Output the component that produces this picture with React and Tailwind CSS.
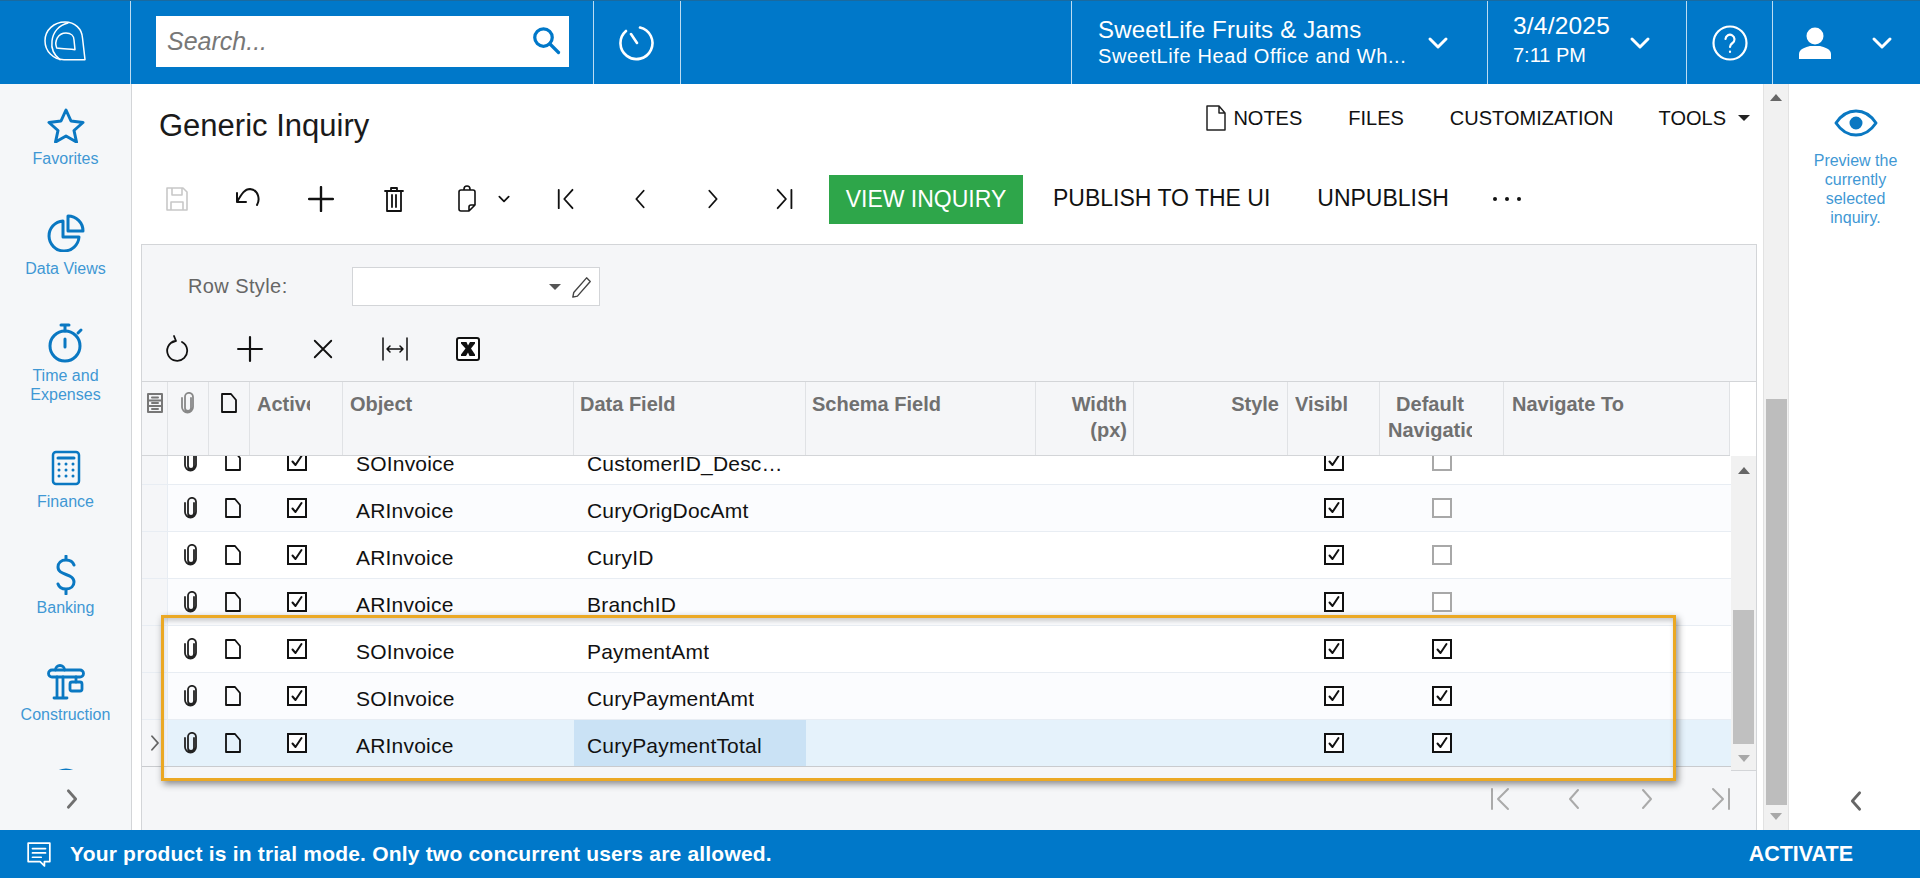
import React from 'react'

const Ico = ({ w = 24, h = 24, vb = '0 0 24 24', sw = 2, color = 'currentColor', children, className = '' }) => (
  <svg width={w} height={h} viewBox={vb} fill="none" stroke={color} strokeWidth={sw} strokeLinecap="round" strokeLinejoin="round" className={className}>
    {children}
  </svg>
)

const Chevron = ({ dir = 'down', color = '#fff', w = 22, h = 22, sw = 3 }) => {
  const d = { down: 'M4 8l8 8 8-8', right: 'M8 3l8 9-8 9', left: 'M16 3l-8 9 8 9' }[dir]
  return <Ico w={w} h={h} sw={sw} color={color}><path d={d} /></Ico>
}

const Clip = ({ color = '#222' }) => (
  <Ico w={16} h={22} vb="0 0 16 22" sw={1.8} color={color}>
    <path d="M11 6v10a3 3 0 0 1-6 0V5a4 4 0 0 1 8-.3V15a5.5 5.5 0 0 1-11 0V6" />
  </Ico>
)

const Doc = () => (
  <Ico w={18} h={22} vb="0 0 18 22" sw={1.8} color="#111">
    <path d="M2 2h9l5 6v12H2z" />
  </Ico>
)

const Check = ({ on = true }) => (
  <div className={on ? 'w-5 h-5 border-2 border-[#111] bg-white flex items-center justify-center' : 'w-5 h-5 border-2 border-[#a8a8a8] bg-white'}>
    {on && (
      <Ico w={16} h={16} vb="0 0 16 16" sw={2} color="#111"><path d="M3.5 8.5l3 3.5 6-9" /></Ico>
    )}
  </div>
)

const navItems = [
  {
    label: ['Favorites'], h: 'h-[107px]', box: 'h-[39px]',
    icon: <Ico w={38} h={36} vb="0 0 38 36" sw={3}><path d="M19 3l5 11 12 1.5-9 8 2.500 11.500L19 29 8.500 35 11 23.500l-9-8L14 14z" /></Ico>,
  },
  {
    label: ['Data Views'], h: 'h-[109px]', box: 'h-[42px]',
    icon: (
      <Ico w={38} h={38} vb="0 0 38 38" sw={3}>
        <path d="M16 7a15 15 0 1 0 16 16H16z" />
        <path d="M21 2a15 15 0 0 1 15 15H21z" />
      </Ico>
    ),
  },
  {
    label: ['Time and', 'Expenses'], h: 'h-[127px]', box: 'h-[40px]',
    icon: (
      <Ico w={38} h={40} vb="0 0 38 40" sw={3}>
        <circle cx="18" cy="23" r="15" />
        <path d="M14 2h8M18 2v6M18 16v8M31 10l3-3" />
      </Ico>
    ),
  },
  {
    label: ['Finance'], h: 'h-[105px]', box: 'h-[39px]',
    icon: (
      <Ico w={30} h={36} vb="0 0 30 36" sw={2.500}>
        <rect x="2" y="2" width="26" height="32" rx="3" />
        <path d="M7 8h16" strokeWidth="3" />
        <path d="M8 14h.01M15 14h.01M22 14h.01M8 20h.01M15 20h.01M22 20h.01M8 26h.01M15 26h.01M22 26h.01" strokeWidth="3" />
      </Ico>
    ),
  },
  {
    label: ['Banking'], h: 'h-[107px]', box: 'h-[40px]',
    icon: (
      <Ico w={24} h={40} vb="0 0 24 40" sw={3}>
        <path d="M20 10c-1-3-4-5-8-5-5 0-8 3-8 7 0 9 16 6 16 15 0 4-3 7-8 7-4 0-7-2-8-5M12 1v4M12 34v5" />
      </Ico>
    ),
  },
  {
    label: ['Construction'], h: 'h-[105px]', box: 'h-[40px]',
    icon: (
      <Ico w={38} h={38} vb="0 0 38 38" sw={2.800}>
        <path d="M5 8h28a3.500 3.500 0 0 1 0 7H5a3.500 3.500 0 0 1 0-7z" />
        <path d="M8.500 8a4.500 4.500 0 0 1 9 0M10 15v21M16 15v21M7 36h13M29 15v5" />
        <rect x="23" y="20" width="12" height="9" rx="2" />
      </Ico>
    ),
  },
  {
    label: [], h: 'h-[105px]', box: 'h-[40px]',
    icon: <Ico w={38} h={38} vb="0 0 38 38" sw={3}><circle cx="19" cy="19" r="16" /></Ico>,
  },
]

const columns = [
  { w: 'w-[26px]', icon: 'cab' },
  { w: 'w-[41px]', icon: 'clip' },
  { w: 'w-[41px]', icon: 'doc' },
  { w: 'w-[93px]', lines: ['Active'], inner: 'w-[53px]', pad: 'pl-[7px]' },
  { w: 'w-[231px]', lines: ['Object'], pad: 'pl-[7px]' },
  { w: 'w-[232px]', lines: ['Data Field'], pad: 'pl-[6px]' },
  { w: 'w-[230px]', lines: ['Schema Field'], pad: 'pl-[6px]' },
  { w: 'w-[98px]', lines: ['Width', '(px)'], pad: 'pr-[6px] text-right' },
  { w: 'w-[154px]', lines: ['Style'], pad: 'pr-2 text-right' },
  { w: 'w-[92px]', lines: ['Visible'], pad: 'pl-[7px]', inner: 'w-[53px]' },
  { w: 'w-[124px]', lines: ['Default', 'Navigation'], pad: 'pl-2', inner: 'w-[84px] text-center' },
  { w: 'w-[226px]', lines: ['Navigate To'], pad: 'pl-2' },
]

const rows = [
  { obj: 'SOInvoice', field: 'CustomerID_Description', nav: false, partial: true },
  { obj: 'ARInvoice', field: 'CuryOrigDocAmt', nav: false },
  { obj: 'ARInvoice', field: 'CuryID', nav: false },
  { obj: 'ARInvoice', field: 'BranchID', nav: false },
  { obj: 'SOInvoice', field: 'PaymentAmt', nav: true },
  { obj: 'SOInvoice', field: 'CuryPaymentAmt', nav: true },
  { obj: 'ARInvoice', field: 'CuryPaymentTotal', nav: true, selected: true },
]

function GridRow({ row, i }) {
  const bg = row.selected ? 'bg-[#e5f2fb]' : i % 2 === 0 ? 'bg-white' : 'bg-[#fbfcfe]'
  return (
    <div className={`flex border-b ${row.selected ? 'border-[#c9cbce]' : 'border-[#e8edf3]'} ${row.partial ? 'h-[29px] items-end overflow-hidden' : 'h-[47px]'} ${bg}`}>
      <div className="w-[26px] shrink-0 self-stretch border-r border-[#e8edf3] bg-[#f5f6f8] flex items-center justify-center">
        {row.selected && <Chevron dir="right" color="#666" w={18} h={24} sw={2.500} />}
      </div>
      <div className="w-[41px] h-[46px] shrink-0 flex items-center justify-center pl-[5px]"><Clip /></div>
      <div className="w-[41px] h-[46px] shrink-0 flex items-center justify-center pl-[7px]"><Doc /></div>
      <div className="w-[93px] h-[46px] shrink-0 flex items-center justify-center"><Check /></div>
      <div className="w-[231px] h-[46px] shrink-0 flex items-center pl-[13px] pt-[6px] text-[21px] tracking-[0.2px] text-[#111]">{row.obj}</div>
      <div className={`w-[232px] h-[46px] shrink-0 flex items-center pl-[13px] pr-[22px] pt-[6px] text-[21px] tracking-[0.2px] text-[#111] ${row.selected ? 'bg-[#cae2f5]' : ''}`}>
        <span className="truncate">{row.field}</span>
      </div>
      <div className="w-[482px] shrink-0" />
      <div className="w-[92px] h-[46px] shrink-0 flex items-center justify-center"><Check /></div>
      <div className="w-[124px] h-[46px] shrink-0 flex items-center justify-center"><Check on={row.nav} /></div>
      <div className="w-[226px] shrink-0" />
    </div>
  )
}

function HeaderIcon({ name }) {
  if (name === 'cab') {
    return (
      <Ico w={18} h={22} vb="0 0 18 22" sw={2} color="#777">
        <rect x="2" y="2" width="14" height="18" />
        <path d="M2 8.500h14M2 14h14M6 5.500h6M6 11h6M6 17h6" />
      </Ico>
    )
  }
  if (name === 'clip') return <Clip color="#888" />
  return <Doc />
}

export default function App() {
  return (
    <div className="w-[1920px] h-[878px] overflow-hidden relative flex flex-col bg-white font-['Liberation_Sans',Arial,sans-serif]">
      {/* Header */}
      <header className="h-[84px] shrink-0 flex bg-[#0078c9] border-t border-[#1a6a9f] text-white">
        <div className="w-[131px] shrink-0 border-r border-[#bcdcf2] flex items-center justify-center pb-[2px]">
          <Ico w={42} h={42} vb="0 0 42 42" sw={1.500}>
            <path d="M41 38.700H20C9 38.700 1 30 1 19.700 1 9 10 1 21 1c10 0 17 7 17.500 16z" />
            <path d="M16 38.700C10 34 7 27 8 20 9 11 15 4 24 2" />
            <path d="M12.700 27c-2.700-7 1.300-15 9.300-15 5 0 8 3 8 7l1 9.700c-7-.700-13-.700-18.300-1.700z" />
          </Ico>
        </div>
        <div className="w-[463px] shrink-0 border-r border-[#bcdcf2] flex items-center pl-[25px] pb-[2px]">
          <div className="w-[413px] h-[51px] bg-white flex items-center justify-between pl-[11px] pr-[8px]">
            <span className="italic text-[25px] text-[#777]">Search...</span>
            <span className="pb-[4px]"><Ico w={30} h={30} sw={2.600} color="#0078c9"><circle cx="10" cy="10" r="7" /><path d="M15 15l7 7" /></Ico></span>
          </div>
        </div>
        <div className="w-[87px] shrink-0 border-r border-[#bcdcf2] flex items-center justify-center pr-[2px]">
          <Ico w={38} h={38} vb="0 0 38 38" sw={2.600}><path d="M23 3.500A16 16 0 1 1 9 7M14 10l6 9" /></Ico>
        </div>
        <div className="flex-1" />
        <div className="w-[417px] shrink-0 border-l border-r border-[#bcdcf2] flex items-center pl-[26px]">
          <div className="w-[328px] whitespace-nowrap">
            <div className="text-[24px] leading-[28px] tracking-[0.2px]">SweetLife Fruits &amp; Jams</div>
            <div className="text-[20px] leading-[25px] tracking-[0.6px]">SweetLife Head Office and Wh...</div>
          </div>
          <Chevron w={24} h={24} />
        </div>
        <div className="w-[199px] shrink-0 border-r border-[#bcdcf2] flex items-center pl-[25px]">
          <div className="w-[115px] pb-[3px]">
            <div className="text-[24.500px] leading-[28px] tracking-[0.2px]">3/4/2025</div>
            <div className="text-[20px] leading-[30px]">7:11 PM</div>
          </div>
          <Chevron w={24} h={24} />
        </div>
        <div className="w-[86px] shrink-0 border-r border-[#bcdcf2] flex items-center justify-center">
          <Ico w={38} h={38} vb="0 0 38 38" sw={2.200}>
            <circle cx="19" cy="19" r="16.500" />
            <path d="M14.500 15a4.500 4.500 0 1 1 7 4c-1.500 1-2.500 2-2.500 4M19 27.500v.5" />
          </Ico>
        </div>
        <div className="w-[147px] shrink-0 flex items-center pl-[24px] gap-[37px]">
          <svg width="36" height="32" viewBox="0 0 36 32" fill="#fff">
            <circle cx="18" cy="9" r="8.500" />
            <path d="M2 32v-5c0-5 7-7 11-8h10c4 1 11 3 11 8v5z" />
          </svg>
          <Chevron w={24} h={24} />
        </div>
      </header>

      <div className="flex-1 flex min-h-0">
        {/* Sidebar */}
        <aside className="w-[132px] shrink-0 bg-[#f5f7f9] border-r border-[#d3d5d8] flex flex-col">
          <div className="h-[686px] overflow-hidden">
            {navItems.map((item, i) => (
              <div key={i} className={`${item.h} pt-[23px] flex flex-col items-center text-[#0a78c2]`}>
                <div className={`${item.box} flex items-start justify-center`}>{item.icon}</div>
                <div className="mt-[3px] text-center text-[16px] leading-[19px] text-[#3f98d4]">
                  {item.label.map((l) => <div key={l}>{l}</div>)}
                </div>
              </div>
            ))}
          </div>
          <div className="flex-1 flex items-center justify-center pl-[12px] pb-[2px]">
            <Chevron dir="right" color="#707070" />
          </div>
        </aside>

        {/* Main */}
        <main className="w-[1631px] shrink-0 flex flex-col pl-[9px] pr-[7px]">
          <div className="h-[91px] shrink-0 flex justify-between items-start -ml-[9px]">
            <h1 className="pl-[27px] pt-[24px] text-[31px] leading-[36px] text-[#1a1a1a]">Generic Inquiry</h1>
            <div className="flex items-center pt-[21px] text-[20px] leading-[24px] text-[#111] pr-[6px] whitespace-nowrap">
              <Ico w={20} h={26} vb="0 0 20 26" sw={1.500} color="#222" className="mr-[7px]"><path d="M1 1h12l6 7v17H1zM13 1v7h6" /></Ico>
              <span>NOTES</span>
              <span className="ml-[46px]">FILES</span>
              <span className="ml-[46px]">CUSTOMIZATION</span>
              <span className="ml-[45px]">TOOLS</span>
              <span className="ml-[12px] w-0 h-0 border-x-[6px] border-x-transparent border-t-[6px] border-t-[#222]" />
            </div>
          </div>

          {/* Toolbar */}
          <div className="h-[69px] shrink-0 flex items-start text-[#111] whitespace-nowrap">
            <div className="h-[47px] w-[72px] shrink-0 flex items-center justify-center">
              <Ico w={24} h={26} vb="0 0 24 26" sw={1.600} color="#c8c8c8">
                <path d="M2 2h16l4 4v18H2zM7 2v7h10V2M6 24v-8h12v8" />
              </Ico>
            </div>
            <div className="h-[47px] w-[72px] shrink-0 flex items-center justify-center">
              <Ico w={28} h={24} vb="0 0 28 24" sw={2}><path d="M22 18c3-5 2-15-7-16-5 0-8 4-13 13M2 6v9h9" /></Ico>
            </div>
            <div className="h-[47px] w-[72px] shrink-0 flex items-center justify-center">
              <Ico w={26} h={26} sw={2.200}><path d="M12 1v22M1 12h22" /></Ico>
            </div>
            <div className="h-[47px] w-[73px] shrink-0 flex items-center justify-center">
              <Ico w={20} h={26} vb="0 0 20 26" sw={1.800}>
                <path d="M1 5h18M7 5V2h6v3M3 5v20h14V5M8 9v12M12 9v12" />
              </Ico>
            </div>
            <div className="h-[47px] w-[101px] shrink-0 flex items-center pl-[27px]">
              <Ico w={20} h={28} vb="0 0 20 28" sw={1.600}>
                <path d="M4 5h12a2 2 0 0 1 2 2v13l-6 6H4a2 2 0 0 1-2-2V7a2 2 0 0 1 2-2zM7 5V4a3 3 0 0 1 6 0v1M18 20h-4a2 2 0 0 0-2 2v4" />
              </Ico>
              <span className="ml-[20px]"><Chevron color="#111" w={14} h={14} sw={3} /></span>
            </div>
            <div className="h-[47px] w-[72px] shrink-0 flex items-center justify-center">
              <Ico w={22} h={24} sw={2}><path d="M3 2v20M18 2l-9 10 9 10" /></Ico>
            </div>
            <div className="h-[47px] w-[73px] shrink-0 flex items-center justify-center">
              <Chevron dir="left" color="#111" w={22} h={24} sw={2} />
            </div>
            <div className="h-[47px] w-[73px] shrink-0 flex items-center justify-center">
              <Chevron dir="right" color="#111" w={22} h={24} sw={2} />
            </div>
            <div className="h-[47px] w-[72px] shrink-0 flex items-center justify-center">
              <Ico w={22} h={24} sw={2}><path d="M4 2l9 10-9 10M19 2v20" /></Ico>
            </div>
            <div className="ml-[8px] h-[49px] w-[194px] shrink-0 bg-[#2ea64a] text-white text-[23px] flex items-center justify-center">VIEW INQUIRY</div>
            <div className="ml-[30px] h-[47px] flex items-center text-[23px]">PUBLISH TO THE UI</div>
            <div className="ml-[47px] h-[47px] flex items-center text-[23px]">UNPUBLISH</div>
            <div className="ml-[44px] h-[47px] flex items-center gap-[8px]">
              <span className="w-[4px] h-[4px] rounded-full bg-[#111]" />
              <span className="w-[4px] h-[4px] rounded-full bg-[#111]" />
              <span className="w-[4px] h-[4px] rounded-full bg-[#111]" />
            </div>
          </div>

          {/* Panel */}
          <section className="flex-1 min-h-0 w-[1616px] bg-[#f5f6f8] border-l border-t border-r border-[#d3d5d8] flex flex-col">
            <div className="h-[75px] shrink-0 pt-[22px] pl-[46px] flex items-start">
              <span className="w-[164px] pt-[4px] text-[20px] tracking-[0.4px] text-[#666]">Row Style:</span>
              <div className="w-[248px] h-[39px] border border-[#d3d5d8] bg-white flex items-center justify-end pr-[6px] gap-[10px]">
                <span className="w-0 h-0 border-x-[6px] border-x-transparent border-t-[6px] border-t-[#555]" />
                <Ico w={22} h={24} sw={1.500} color="#444"><path d="M17 2l4 4L7 22l-5 1 1-5z" /></Ico>
              </div>
            </div>
            <div className="h-[61px] shrink-0 flex items-center pb-[4px] text-[#111]">
              <div className="w-[72px] flex justify-center">
                <Ico w={24} h={28} vb="0 0 24 28" sw={1.800}><path d="M16 7a10 10 0 1 1-7-1M8 1l2 5-5 2" /></Ico>
              </div>
              <div className="w-[72px] flex justify-center"><Ico w={26} h={26} sw={2}><path d="M12 1v22M1 12h22" /></Ico></div>
              <div className="w-[73px] flex justify-center"><Ico w={22} h={22} sw={2}><path d="M3 3l18 18M21 3L3 21" /></Ico></div>
              <div className="w-[72px] flex justify-center">
                <Ico w={28} h={24} vb="0 0 28 24" sw={1.500}><path d="M2 1v22M26 1v22M6 12h16M9 9l-3 3 3 3M19 9l3 3-3 3" /></Ico>
              </div>
              <div className="w-[73px] flex justify-center">
                <svg width="24" height="24" viewBox="0 0 24 24" fill="#111">
                  <rect x="1" y="1" width="22" height="22" rx="2" fill="#fff" stroke="#111" strokeWidth="2" />
                  <path d="M5 5h5.500l1.500 3.500L14 5h5v1.500l-4 5 4 6V19h-5.500L12 15.500 10 19H5v-1.500l4.500-6-4.500-5z" />
                </svg>
              </div>
            </div>

            {/* Grid */}
            <div className="flex h-[75px] shrink-0 bg-white border-t border-[#d3d5d8]">
              <div className="flex bg-[#f5f6f8] border-b border-[#d3d5d8] text-[20px] leading-[26px] font-bold text-[#707070]">
                {columns.map((c, i) => (
                  <div key={i} className={`${c.w} shrink-0 border-r border-[#e0e2e5] ${c.pad || ''} ${c.icon ? 'flex justify-center items-start pt-[10px]' : 'pt-[9px]'}`}>
                    {c.icon ? (
                      <HeaderIcon name={c.icon} />
                    ) : (
                      <div className={`${c.inner || ''} overflow-hidden whitespace-nowrap`}>
                        {c.lines.map((l) => <div key={l} className="overflow-hidden">{l}</div>)}
                      </div>
                    )}
                  </div>
                ))}
              </div>
            </div>
            <div className="flex h-[315px] shrink-0">
              <div className="w-[1589px] shrink-0 overflow-hidden">
                {rows.map((row, i) => <GridRow key={row.field} row={row} i={i} />)}
              </div>
              <div className="flex-1 bg-[#f1f1f1] border-b border-[#d3d5d8] flex flex-col items-center">
                <span className="mt-[11px] w-0 h-0 border-x-[6px] border-x-transparent border-b-[7px] border-b-[#666]" />
                <div className="mt-[136px] w-[21px] h-[134px] bg-[#c0c0c0]" />
                <span className="mt-[11px] w-0 h-0 border-x-[6px] border-x-transparent border-t-[7px] border-t-[#a8a8a8]" />
              </div>
            </div>
            <div className="flex-1 flex items-start justify-end pt-[15px] pr-[24px] gap-[49px]">
              <Ico w={24} h={26} sw={2} color="#aaa"><path d="M3 2v20M19 2l-10 10 10 10" /></Ico>
              <Chevron dir="left" color="#aaa" w={24} h={26} sw={2} />
              <Chevron dir="right" color="#aaa" w={24} h={26} sw={2} />
              <Ico w={24} h={26} sw={2} color="#aaa"><path d="M5 2l10 10L5 22M21 2v20" /></Ico>
            </div>
          </section>
        </main>

        {/* Page scrollbar */}
        <div className="w-[26px] shrink-0 bg-[#f1f1f1] border-l border-r border-[#e2e2e2] flex flex-col items-center">
          <span className="mt-[10px] w-0 h-0 border-x-[6px] border-x-transparent border-b-[7px] border-b-[#666]" />
          <div className="mt-[298px] w-[21px] h-[406px] bg-[#bdbdbd]" />
          <span className="mt-[8px] w-0 h-0 border-x-[6px] border-x-transparent border-t-[7px] border-t-[#a8a8a8]" />
        </div>

        {/* Right panel */}
        <aside className="flex-1 flex flex-col items-center bg-white pt-[25px] pb-[18px] pl-[2px]">
          <Ico w={44} h={28} vb="0 0 44 28" sw={3} color="#0a78c2">
            <path d="M2 14C8 5 15 2 22 2s14 3 20 12c-6 9-13 12-20 12S8 23 2 14z" />
            <circle cx="22" cy="14" r="5" fill="#0a78c2" />
          </Ico>
          <div className="mt-[14px] text-center text-[16px] leading-[19px] text-[#3f98d4] w-[110px]">
            Preview the currently selected inquiry.
          </div>
          <div className="mt-auto"><Chevron dir="left" color="#666" /></div>
        </aside>
      </div>

      {/* Trial bar */}
      <footer className="h-[48px] shrink-0 bg-[#0078c9] flex items-center text-white pl-[26px] pr-[67px]">
        <Ico w={26} h={26} sw={1.600}><path d="M2 2h20v17h-5v4l-4-4H2zM6 7h12M6 11h12M6 15h8" /></Ico>
        <span className="ml-[18px] font-bold text-[21px] tracking-[0.2px]">Your product is in trial mode. Only two concurrent users are allowed.</span>
        <span className="ml-auto font-bold text-[21.500px]">ACTIVATE</span>
      </footer>

      {/* Annotation highlight */}
      <div className="absolute left-[161px] top-[615px] w-[1515px] h-[166px] border-[3px] border-[#eba823] shadow-[2px_3px_7px_rgba(0,0,0,0.45),inset_0_4px_5px_-1px_rgba(0,0,0,0.2)]" />
    </div>
  )
}
